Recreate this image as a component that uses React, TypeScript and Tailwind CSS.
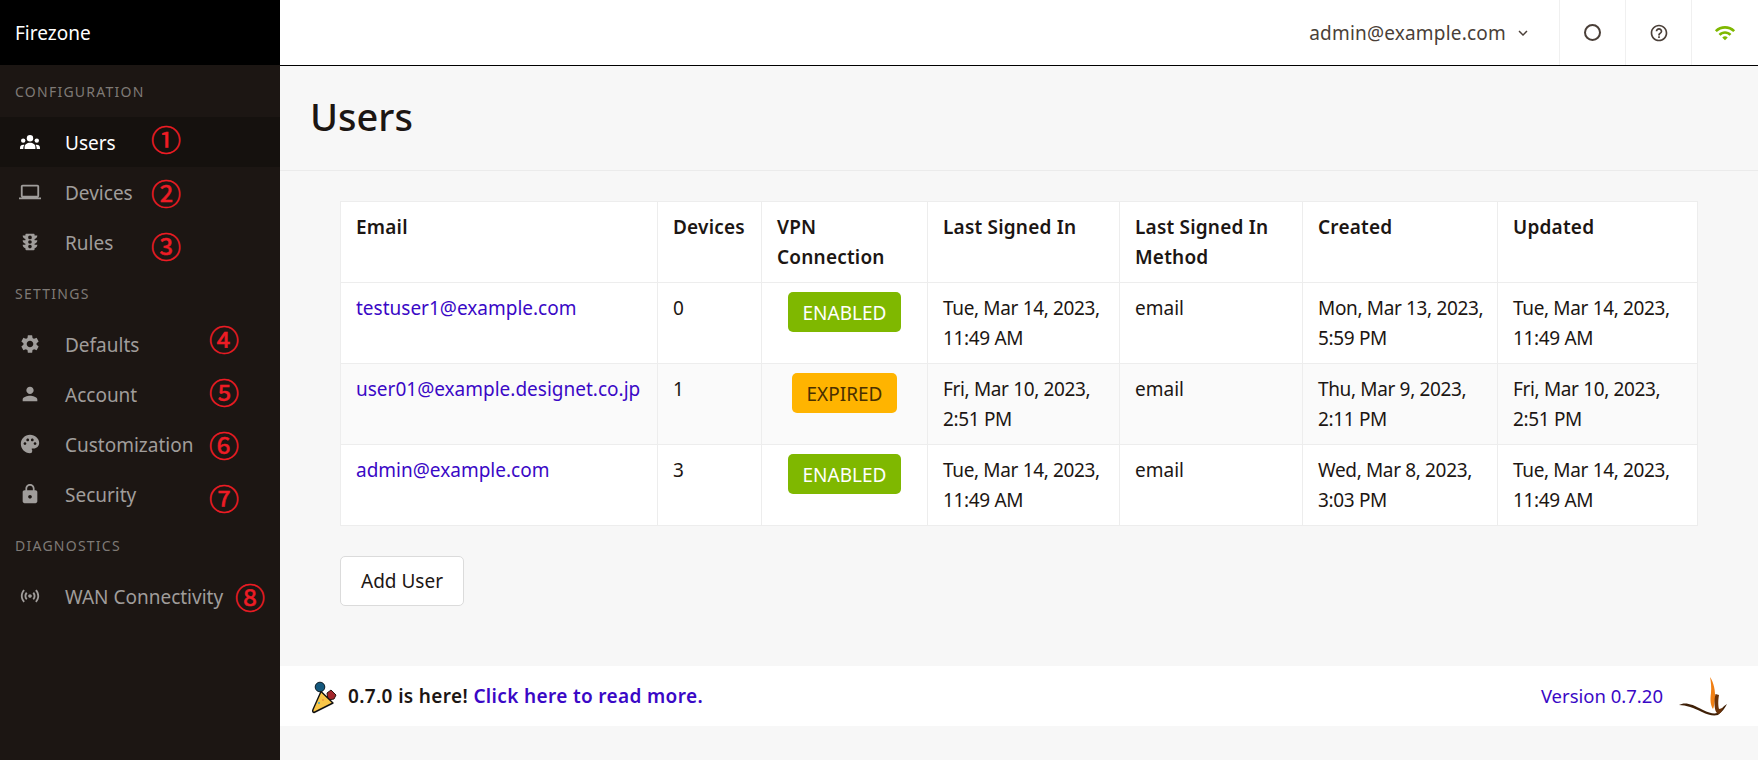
import type { ReactNode } from "react";
import {
  MdLaptop,
  MdTraffic,
  MdSettings,
  MdPerson,
  MdPalette,
  MdLock,
  MdSensors,
  MdHelpOutline,
  MdWifi,
  MdKeyboardArrowDown,
} from "react-icons/md";

function GroupIcon() {
  return (
    <svg width="20" height="14" viewBox="0 0 20 14" fill="currentColor">
      <circle cx="10" cy="3.3" r="3.2" />
      <path d="M4.6 14v-1.6C4.6 9.4 7 7.8 10 7.8s5.4 1.6 5.4 4.6V14Z" />
      <circle cx="3.2" cy="5.6" r="2.2" />
      <path d="M0 14v-1c0-2 1.3-3.2 3.4-3.2.5 0 .8 0 1.1.2-.8.9-1.2 2-1.2 3.5V14Z" />
      <circle cx="16.8" cy="5.6" r="2.2" />
      <path d="M20 14v-1c0-2-1.3-3.2-3.4-3.2-.5 0-.8 0-1.1.2.8.9 1.2 2 1.2 3.5V14Z" />
    </svg>
  );
}

const sections = [
  {
    title: "CONFIGURATION",
    items: [
      { label: "Users", icon: <GroupIcon />, mark: "①", active: true, pos: "left-[151px] top-[5px]" },
      { label: "Devices", icon: <MdLaptop />, mark: "②", pos: "left-[151px] top-[9px]" },
      { label: "Rules", icon: <MdTraffic />, mark: "③", pos: "left-[151px] top-[12px]" },
    ],
  },
  {
    title: "SETTINGS",
    items: [
      { label: "Defaults", icon: <MdSettings />, mark: "④", pos: "left-[209px] top-[3px]" },
      { label: "Account", icon: <MdPerson />, mark: "⑤", pos: "left-[209px] top-[6px]" },
      { label: "Customization", icon: <MdPalette />, mark: "⑥", pos: "left-[209px] top-[9px]" },
      { label: "Security", icon: <MdLock />, mark: "⑦", pos: "left-[209px] top-[12px]" },
    ],
  },
  {
    title: "DIAGNOSTICS",
    items: [{ label: "WAN Connectivity", icon: <MdSensors />, mark: "⑧", pos: "left-[235px] top-[9px]" }],
  },
];

const users = [
  {
    email: "testuser1@example.com",
    devices: "0",
    vpn: "ENABLED",
    signedIn: ["Tue, Mar 14, 2023,", "11:49 AM"],
    created: ["Mon, Mar 13, 2023,", "5:59 PM"],
    updated: ["Tue, Mar 14, 2023,", "11:49 AM"],
  },
  {
    email: "user01@example.designet.co.jp",
    devices: "1",
    vpn: "EXPIRED",
    signedIn: ["Fri, Mar 10, 2023,", "2:51 PM"],
    created: ["Thu, Mar 9, 2023,", "2:11 PM"],
    updated: ["Fri, Mar 10, 2023,", "2:51 PM"],
  },
  {
    email: "admin@example.com",
    devices: "3",
    vpn: "ENABLED",
    signedIn: ["Tue, Mar 14, 2023,", "11:49 AM"],
    created: ["Wed, Mar 8, 2023,", "3:03 PM"],
    updated: ["Tue, Mar 14, 2023,", "11:49 AM"],
  },
];

function Th({ children, className }: { children: ReactNode; className: string }) {
  return (
    <th
      className={`border border-[#ededed] px-[15px] pt-[10px] pb-[7px] text-left align-top font-semibold tracking-[0.2px] ${className}`}
    >
      {children}
    </th>
  );
}

function Td({ children }: { children: ReactNode }) {
  return <td className="border border-[#ededed] px-[15px] pt-[10px] pb-[7px] align-top whitespace-nowrap">{children}</td>;
}

function Lines({ lines }: { lines: string[] }) {
  return (
    <div className="tracking-[-0.35px]">
      {lines.map((l) => (
        <div key={l}>{l}</div>
      ))}
    </div>
  );
}

function PartyIcon() {
  return (
    <svg width="40" height="35" viewBox="0 0 40 35">
      <circle cx="15" cy="8" r="4.8" fill="#14587d" stroke="#0c1a22" strokeWidth="1" />
      <path d="M22 14l4-3 5 5-2 4-6 1Z" fill="#a3262b" stroke="#2a1410" strokeWidth="1" />
      <path d="M16 12.5 28 24 9 33.5Q7 33 8 30.5Z" fill="#f9c648" stroke="#111" strokeWidth="1.4" strokeLinejoin="round" />
      <circle cx="14" cy="24" r="0.9" fill="#2a9fd6" />
      <circle cx="18" cy="21" r="0.8" fill="#e5793a" />
    </svg>
  );
}

function Logo() {
  return (
    <svg width="65" height="50" viewBox="0 0 65 50">
      <path d="M9 34C14 31 21 32 33 39 39 42 44 43 47 42 50 40 53 35 57 33 55 37 52 41 48 44 43 45 38 44 32 41 24 37 16 34 9 34Z" fill="#3f2008" />
      <path d="M40 6C44 12 45.500 20 45 28 44.500 32 44 36 43 38 40.500 34 40 29 41 22 41.500 16 41 11 40 6Z" fill="#f07f13" />
      <path d="M45.500 23 49 24C48 29 48 35 49 38L53 37C52 40 50 43 48 43 45 41 44.500 36 44.500 31 44.500 28 45 25 45.500 23Z" fill="#6b3208" />
    </svg>
  );
}

export default function App() {
  return (
    <div className="flex h-[760px] w-full overflow-hidden bg-[#f7f7f7] font-['Noto_Sans',sans-serif] text-[19px] leading-[30px] text-[#1c1613]">
      <aside className="flex w-[280px] shrink-0 flex-col bg-[#1c1613]">
        <div className="flex h-[65px] items-center bg-black px-[15px] text-white">Firezone</div>
        {sections.map((s) => (
          <div key={s.title}>
            <div className="flex h-[52px] items-center px-[15px] pt-[1px] text-[14px] tracking-[1.25px] text-[#7f7a76]">
              {s.title}
            </div>
            {s.items.map((it) => (
              <div
                key={it.label}
                className={`relative flex h-[50px] items-center ${
                  it.active ? "bg-[#15110e] text-white" : "text-[#a09d9b]"
                }`}
              >
                <span className="flex w-[65px] justify-center pr-[5px] text-[22px]">{it.icon}</span>
                <span className="pt-[2px]">{it.label}</span>
                <span
                  className={`absolute ${it.pos} font-['Noto_Sans_CJK_JP',sans-serif] text-[30px] leading-[32px] font-normal text-[#ee1c25] [-webkit-text-stroke:0.5px_#ee1c25]`}
                >
                  {it.mark}
                </span>
              </div>
            ))}
          </div>
        ))}
      </aside>

      <main className="flex min-w-0 flex-1 flex-col">
        <header className="flex h-[66px] shrink-0 items-center justify-end border-b border-black bg-white text-[#4a3f38]">
          <div className="flex items-center gap-2 pr-[27px]">
            <span className="tracking-[0.2px]">admin@example.com</span>
            <MdKeyboardArrowDown className="text-[18px]" />
          </div>
          <div className="flex h-full w-[66px] items-center justify-center border-l border-[#f0f0f0]">
            <span className="h-[17px] w-[17px] rounded-full border-2 border-[#4a3f38]" />
          </div>
          <div className="flex h-full w-[66px] items-center justify-center border-l border-[#f0f0f0] text-[20px]">
            <MdHelpOutline />
          </div>
          <div className="flex h-full w-[67px] items-center justify-center border-l border-[#f0f0f0] text-[22px] text-[#7fb800]">
            <MdWifi />
          </div>
        </header>

        <div className="flex h-[105px] shrink-0 items-center border-b border-[#ebebeb] px-[30px] pb-[4px] text-[38px] font-medium">
          Users
        </div>

        <div className="px-[60px] pt-[30px]">
          <table className="w-[1357px] table-fixed border-collapse bg-white">
            <thead>
              <tr className="h-[81px]">
                <Th className="w-[317px]">Email</Th>
                <Th className="w-[104px]">Devices</Th>
                <Th className="w-[166px]">VPN Connection</Th>
                <Th className="w-[192px]">Last Signed In</Th>
                <Th className="w-[183px]">Last Signed In Method</Th>
                <Th className="w-[195px]">Created</Th>
                <Th className="w-[200px]">Updated</Th>
              </tr>
            </thead>
            <tbody>
              {users.map((u, i) => (
                <tr key={u.email} className={`h-[81px] ${i === 1 ? "bg-[#fafafa]" : ""}`}>
                  <Td>
                    <span className="text-[#3a08c6]">{u.email}</span>
                  </Td>
                  <Td>{u.devices}</Td>
                  <Td>
                    <div className="-mt-[1px] flex justify-center">
                      <span
                        className={`flex h-10 items-center rounded-[5px] px-[15px] pt-[1px] ${
                          u.vpn === "ENABLED" ? "bg-[#7fb800] text-white" : "bg-[#ffb400] text-[#4a3000]"
                        }`}
                      >
                        {u.vpn}
                      </span>
                    </div>
                  </Td>
                  <Td>
                    <Lines lines={u.signedIn} />
                  </Td>
                  <Td>email</Td>
                  <Td>
                    <Lines lines={u.created} />
                  </Td>
                  <Td>
                    <Lines lines={u.updated} />
                  </Td>
                </tr>
              ))}
            </tbody>
          </table>
          <button className="mt-[30px] h-[50px] w-[124px] rounded-[5px] border border-[#dbdbdb] bg-white">
            Add User
          </button>
        </div>

        <footer className="mt-[60px] flex h-[60px] shrink-0 items-center justify-between bg-white pr-[23px] pl-[25px]">
          <div className="flex items-center gap-[3px] font-semibold tracking-[0.35px]">
            <PartyIcon />
            <span>
              0.7.0 is here! <span className="text-[#3a08c6]">Click here to read more.</span>
            </span>
          </div>
          <div className="flex items-center gap-[7px] text-[18.5px] text-[#3a08c6]">
            <span>Version 0.7.20</span>
            <Logo />
          </div>
        </footer>
      </main>
    </div>
  );
}
